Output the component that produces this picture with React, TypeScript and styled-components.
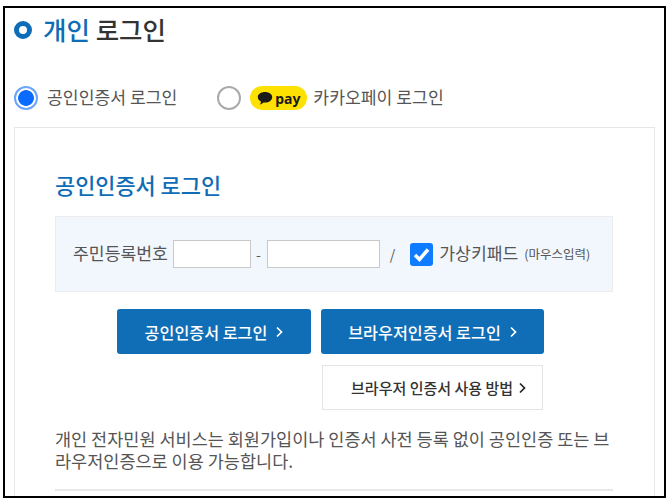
import React from "react";
import styled, { createGlobalStyle } from "styled-components";

const GlobalStyle = createGlobalStyle`
  html, body {
    margin: 0;
    padding: 0;
    background: #fff;
    font-family: "Noto Sans CJK KR", "Noto Sans", sans-serif;
  }
  * {
    box-sizing: border-box;
  }
`;

const App = () => {
  return (
    <>
      <GlobalStyle />
      <Frame>
        <PageTitle>
          <TitleDot />
          <TitleText>
            <TitleAccent>개인</TitleAccent> 로그인
          </TitleText>
        </PageTitle>
        <MethodRow>
          <Method>
            <Radio type="radio" name="method" defaultChecked />
            <MethodLabel>공인인증서 로그인</MethodLabel>
          </Method>
          <Method>
            <Radio type="radio" name="method" />
            <PayBadge>
              <svg width="16" height="14" viewBox="0 0 16 14">
                <path
                  d="M8 1C3.9 1 .8 3.2.8 6.2c0 1.9 1.3 3.5 3.2 4.4l-.7 2.6c0 .2.2.3.3.2l3.1-2c.4 0 .9.1 1.3.1 4.1 0 7.2-2.3 7.2-5.3S12.1 1 8 1z"
                  fill="#1a1a1a"
                />
              </svg>
              pay
            </PayBadge>
            <PayLabel>카카오페이 로그인</PayLabel>
          </Method>
        </MethodRow>
        <Card>
          <CardTitle>공인인증서 로그인</CardTitle>
          <IdPanel>
            <FieldLabel>주민등록번호</FieldLabel>
            <IdInput $width={78} />
            <Dash>-</Dash>
            <IdInput $width={113} />
            <Slash>/</Slash>
            <Check type="checkbox" defaultChecked />
            <FieldLabel>가상키패드</FieldLabel>
            <FieldHint>(마우스입력)</FieldHint>
          </IdPanel>
          <ButtonRow>
            <PrimaryButton $width={194}>
              공인인증서 로그인
              <Chevron color="#fff" />
            </PrimaryButton>
            <PrimaryButton $width={223}>
              브라우저인증서 로그인
              <Chevron color="#fff" />
            </PrimaryButton>
          </ButtonRow>
          <GuideRow>
            <GuideButton>
              브라우저 인증서 사용 방법
              <Chevron color="#222" />
            </GuideButton>
          </GuideRow>
          <Notice>
            개인 전자민원 서비스는 회원가입이나 인증서 사전 등록 없이 공인인증 또는 브라우저인증으로 이용 가능합니다.
          </Notice>
          <Divider />
        </Card>
      </Frame>
    </>
  );
};

export default App;

const Chevron = ({ color }: { color: string }) => (
  <ChevronIcon width="7" height="12" viewBox="0 0 7 12">
    <path d="M1 1.5 5.5 6 1 10.5" fill="none" stroke={color} strokeWidth="1.7" />
  </ChevronIcon>
);

const Frame = styled.div`
  width: 663px;
  height: 492px;
  margin: 6px 0 0 3px;
  border: 2px solid #000;
  padding: 0 9px;
  overflow: hidden;
  color: #444;
`;
const PageTitle = styled.h1`
  display: flex;
  align-items: center;
  gap: 11px;
  height: 44px;
  margin: 0;
  font-size: 25.5px;
  font-weight: 500;
  color: #333;
`;
const TitleText = styled.span`
  margin-top: -3px;
`;
const TitleDot = styled.i`
  width: 18px;
  height: 18px;
  border: 5px solid #0f6cb6;
  border-radius: 50%;
`;
const TitleAccent = styled.span`
  color: #0f6cb6;
`;
const MethodRow = styled.div`
  display: flex;
  align-items: center;
  gap: 40px;
  height: 30px;
  margin-top: 31px;
`;
const Method = styled.label`
  display: flex;
  align-items: center;
  gap: 9px;
`;
const Radio = styled.input`
  appearance: none;
  width: 24px;
  height: 24px;
  margin: 0;
  border: 2px solid #aaa;
  border-radius: 50%;
  background: #fff;
  &:checked {
    border-color: #6aa5fb;
    background: radial-gradient(circle, #0a6cff 0 7.5px, #fff 8.2px);
  }
`;
const MethodLabel = styled.span`
  font-size: 17.2px;
  line-height: 24px;
  margin-top: -2px;
  color: #555;
`;
const PayLabel = styled(MethodLabel)`
  margin-left: -3px;
`;
const PayBadge = styled.span`
  display: flex;
  align-items: center;
  justify-content: center;
  gap: 2px;
  width: 57px;
  height: 24px;
  border-radius: 12px;
  background: #ffe100;
  font-family: "Noto Sans", sans-serif;
  font-size: 14px;
  font-weight: 700;
  color: #1a1a1a;
`;
const Card = styled.section`
  width: 641px;
  height: 400px;
  margin-top: 14px;
  padding: 42px 40px 0;
  border: 1px solid #e6e6e6;
`;
const CardTitle = styled.h2`
  margin: 0;
  font-size: 21.9px;
  line-height: 30px;
  font-weight: 500;
  color: #0f6cb6;
`;
const IdPanel = styled.div`
  display: flex;
  align-items: center;
  width: 558px;
  height: 76px;
  margin-top: 16px;
  padding-left: 17px;
  background: #f2f7fd;
  border: 1px solid #ececec;
`;
const FieldLabel = styled.span`
  margin-top: -3px;
  font-size: 17.2px;
  color: #555;
`;
const FieldHint = styled.span`
  margin: -1px 0 0 6px;
  font-size: 12.5px;
  color: #555;
`;
const IdInput = styled.input<{ $width: number }>`
  width: ${({ $width }) => $width}px;
  height: 28px;
  margin-left: 5px;
  background: #fff;
  border: 1px solid #c8c8c8;
`;
const Dash = styled.span`
  margin-left: 5px;
  margin-right: 1px;
  font-size: 14px;
  color: #555;
`;
const Slash = styled.span`
  margin: 0 15px 0 10px;
  font-size: 14px;
  color: #555;
`;
const Check = styled.input`
  appearance: none;
  width: 23px;
  height: 23px;
  margin: 0 6px 0 0;
  border-radius: 3px;
  background: #fff;
  border: 1px solid #999;
  &:checked {
    border: 0;
    background: #0f7bff
      url("data:image/svg+xml,%3Csvg xmlns='http://www.w3.org/2000/svg' viewBox='0 0 23 23'%3E%3Cpath d='M5 12l4.500 4.500L18 6.500' fill='none' stroke='white' stroke-width='3.500'/%3E%3C/svg%3E");
  }
`;
const ButtonRow = styled.div`
  display: flex;
  gap: 10px;
  margin: 17px 0 0 62px;
`;
const PrimaryButton = styled.button<{ $width: number }>`
  display: flex;
  align-items: center;
  justify-content: center;
  gap: 9px;
  width: ${({ $width }) => $width}px;
  height: 45px;
  border: 0;
  border-radius: 3px;
  background: #106eb7;
  font: inherit;
  font-size: 16.2px;
  font-weight: 500;
  color: #fff;
`;
const GuideRow = styled.div`
  display: flex;
  margin: 11px 0 0 267px;
`;
const GuideButton = styled.button`
  display: flex;
  align-items: center;
  justify-content: flex-end;
  gap: 6px;
  width: 221px;
  height: 45px;
  padding: 0 16px 0 0;
  background: #fff;
  border: 1px solid #e4e4e4;
  font: inherit;
  font-size: 15px;
  font-weight: 500;
  color: #333;
`;
const ChevronIcon = styled.svg`
  flex: none;
`;
const Notice = styled.p`
  width: 558px;
  margin: 18px 0 0;
  font-size: 17.5px;
  line-height: 22px;
  color: #555;
`;
const Divider = styled.hr`
  width: 558px;
  margin: 17px 0 0;
  border: 0;
  border-top: 2px solid #e8e8e8;
`;
